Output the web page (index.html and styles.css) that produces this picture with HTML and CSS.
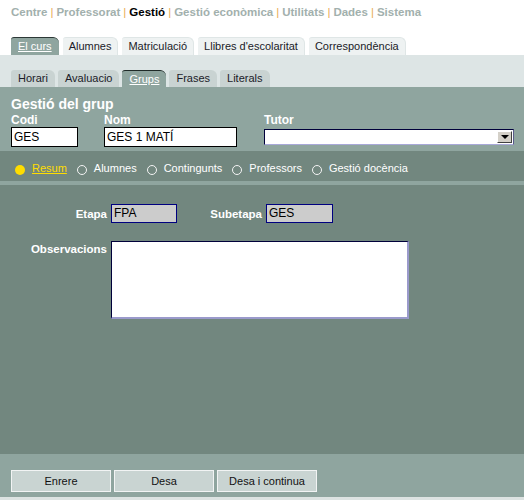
FILE: index.html
```html
<!DOCTYPE html>
<html lang="ca">
<head>
<meta charset="utf-8">
<title>Gestió del grup</title>
<link rel="stylesheet" href="styles.css">
</head>
<body>
<div class="topnav">
  <span class="nl">Centre</span><span class="sep">|</span><span class="nl">Professorat</span><span class="sep">|</span><span class="nl cur">Gestió</span><span class="sep">|</span><span class="nl">Gestió econòmica</span><span class="sep">|</span><span class="nl">Utilitats</span><span class="sep">|</span><span class="nl">Dades</span><span class="sep">|</span><span class="nl">Sistema</span>
</div>
<div class="tabs1">
  <span class="tab on">El curs</span>
  <span class="tab">Alumnes</span>
  <span class="tab">Matriculació</span>
  <span class="tab">Llibres d'escolaritat</span>
  <span class="tab">Correspondència</span>
</div>
<div class="subband">
  <span class="stab">Horari</span>
  <span class="stab">Avaluacio</span>
  <span class="stab on">Grups</span>
  <span class="stab">Frases</span>
  <span class="stab">Literals</span>
</div>
<div class="header">
  <div class="title">Gestió del grup</div>
  <div class="fields">
    <div class="field f1">
      <div class="lbl">Codi</div>
      <div class="inp w67">GES</div>
    </div>
    <div class="field f2">
      <div class="lbl">Nom</div>
      <div class="inp w133">GES 1 MATÍ</div>
    </div>
    <div class="field f3">
      <div class="lbl">Tutor</div>
      <div class="sel"><span class="selbtn"><span class="arrow"></span></span></div>
    </div>
  </div>
</div>
<div class="radios">
  <span class="ritem act"><span class="dot"></span><span class="rtext">Resum</span></span>
  <span class="ritem"><span class="circ"></span><span class="rtext">Alumnes</span></span>
  <span class="ritem"><span class="circ"></span><span class="rtext">Contingunts</span></span>
  <span class="ritem"><span class="circ"></span><span class="rtext">Professors</span></span>
  <span class="ritem"><span class="circ"></span><span class="rtext">Gestió docència</span></span>
</div>
<div class="divider"></div>
<div class="main">
  <div class="row1">
    <span class="flbl l96">Etapa</span>
    <span class="ro w66">FPA</span>
    <span class="flbl l85">Subetapa</span>
    <span class="ro w67b">GES</span>
  </div>
  <div class="row2">
    <span class="flbl l96 top">Observacions</span>
    <div class="txt"></div>
  </div>
</div>
<div class="footer">
  <span class="btn">Enrere</span>
  <span class="btn">Desa</span>
  <span class="btn">Desa i continua</span>
</div>
<div class="strip"></div>
</body>
</html>
```
FILE: styles.css
```css
* { box-sizing: border-box; }
html, body { margin: 0; padding: 0; }
body {
  width: 524px;
  height: 500px;
  overflow: hidden;
  background: #ffffff;
  font-family: "Liberation Sans", Arial, sans-serif;
  font-size: 11px;
  color: #111;
}
.topnav {
  height: 37px;
  padding: 5px 11px 0;
  font-size: 11.5px;
  line-height: 14px;
  font-weight: bold;
  white-space: nowrap;
}
.nl { color: #a2b0ad; }
.nl.cur { color: #000; }
.sep { color: #e9ac55; font-weight: normal; margin: 0 3px; }

.tabs1 {
  height: 18px;
  padding-left: 11px;
  display: flex;
  gap: 4px;
}
.tab {
  height: 18px;
  padding: 0 6px;
  background: #eef2f2;
  border-top: 1px solid #dfe6e6;
  border-right: 1px solid #dfe6e6;
  border-radius: 3px 6px 0 0;
  color: #1b1b28;
  line-height: 17px;
}
.tab.on {
  background: #8fa59f;
  border-top: 1px solid #2c3836;
  border-right: none;
  padding: 0 7px;
  color: #fff;
  text-decoration: underline;
}

.subband {
  height: 32px;
  background: #dde5e5;
  padding: 15px 0 0 11px;
  display: flex;
  gap: 3px;
}
.stab {
  height: 17px;
  line-height: 17px;
  padding: 0 7px;
  background: #c9d3d2;
  border-radius: 3px 6px 0 0;
  color: #1b1b28;
}
.stab.on {
  background: #8fa59f;
  border-top: 1px solid #1f2a28;
  line-height: 16px;
  color: #fff;
  text-decoration: underline;
}

.header {
  height: 64px;
  background: #8fa59f;
  padding: 9px 0 0 11px;
  color: #fff;
}
.title {
  font-size: 14px;
  font-weight: bold;
  line-height: 16px;
  height: 17px;
}
.fields { display: flex; }
.field.f1 { width: 93px; }
.field.f2 { width: 160px; }
.field.f3 { width: 250px; }
.lbl {
  font-size: 12px;
  font-weight: bold;
  line-height: 14px;
  height: 14px;
}
.inp {
  height: 20px;
  background: #fff;
  border: 1px solid #000;
  color: #000;
  font-size: 12px;
  line-height: 18px;
  padding-left: 2px;
}
.w67 { width: 67px; }
.w133 { width: 133px; }
.sel {
  margin-top: 2px;
  width: 250px;
  height: 16px;
  background: #fff;
  border-top: 1px solid #00003a;
  border-left: 1px solid #00003a;
  border-right: 1px solid #5a5a8a;
  border-bottom: 1px solid #a8a8d8;
  display: flex;
  justify-content: flex-end;
  padding: 1px;
}
.selbtn {
  width: 15px;
  height: 12px;
  background: #d4d0c8;
  border-top: 1px solid #fff;
  border-left: 1px solid #fff;
  border-right: 1px solid #404040;
  border-bottom: 1px solid #404040;
  display: flex;
  align-items: center;
  justify-content: center;
}
.arrow {
  width: 0;
  height: 0;
  border-left: 4px solid transparent;
  border-right: 4px solid transparent;
  border-top: 4px solid #000;
}

.radios {
  height: 30px;
  background: #72877f;
  padding: 11px 0 0 15px;
  display: flex;
  color: #fff;
}
.ritem {
  display: flex;
  align-items: flex-start;
  height: 13px;
  line-height: 13px;
  margin-right: 10px;
}
.dot, .circ {
  width: 10px;
  height: 10px;
  border-radius: 50%;
  margin-top: 3px;
  margin-right: 7px;
}
.dot { background: #ffdd00; }
.circ { border: 1px solid #f4f4f4; }
.ritem.act .rtext {
  color: #ffdd00;
  text-decoration: underline;
}

.divider { height: 4px; background: #8fa59f; }

.main {
  height: 269px;
  background: #72877f;
  padding: 19px 0 0 11px;
}
.row1 { display: flex; align-items: center; height: 19px; }
.row2 { display: flex; align-items: flex-start; margin-top: 18px; }
.flbl {
  color: #fff;
  font-weight: bold;
  font-size: 11.5px;
  text-align: right;
  padding-right: 4px;
  line-height: 14px;
}
.flbl.top { padding-top: 1px; }
.l96 { width: 100px; }
.l85 { width: 89px; }
.ro {
  height: 19px;
  background: #cccccc;
  border: 1px solid #000080;
  color: #000;
  font-size: 12px;
  line-height: 17px;
  padding-left: 2px;
}
.w66 { width: 66px; }
.w67b { width: 67px; }
.txt {
  width: 298px;
  height: 78px;
  background: #fff;
  border-top: 1px solid #00003a;
  border-left: 1px solid #00003a;
  border-right: 2px solid #9a9acb;
  border-bottom: 2px solid #9a9acb;
}

.footer {
  height: 43px;
  background: #8fa59f;
  padding: 16px 0 0 11px;
  display: flex;
  gap: 3px;
}
.btn {
  width: 100px;
  height: 22px;
  background: #c9d4d2;
  border: 1px solid #f2f4f4;
  color: #111;
  text-align: center;
  line-height: 20px;
  font-size: 11px;
}
.strip { height: 3px; background: #dde3e2; }
```
